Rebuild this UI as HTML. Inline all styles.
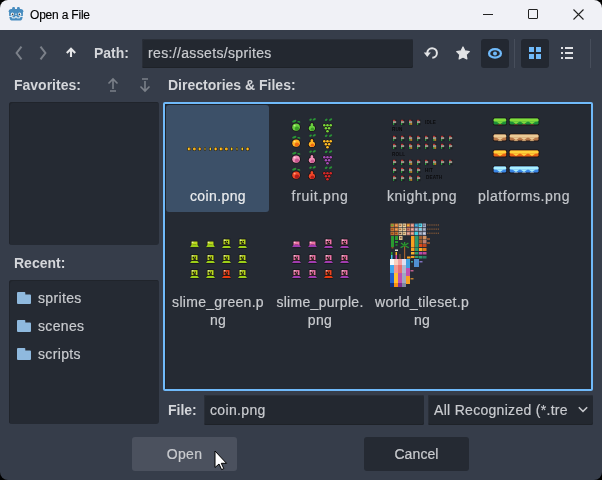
<!DOCTYPE html>
<html><head><meta charset="utf-8">
<style>
html,body{margin:0;padding:0;}
body{width:602px;height:480px;position:relative;overflow:hidden;background:#000;font-family:"Liberation Sans",sans-serif;}
.a{position:absolute;}
#title{left:0;top:0;width:602px;height:30px;background:#f0f1f6;border-radius:8px 8px 0 0;}
#body{left:0;top:30px;width:602px;height:450px;background:#363d4a;border-radius:0 0 8px 8px;}
.lbl{will-change:transform;position:absolute;font-weight:bold;font-size:14px;color:#d4d6da;white-space:pre;line-height:16px;}
.txt{will-change:transform;-webkit-text-stroke:0.2px currentColor;position:absolute;font-size:14px;color:#c9cbcf;white-space:pre;line-height:16px;}
.panel{position:absolute;background:#252a33;border-radius:3px;box-shadow:inset 1px 1px 0 #20242b;}
.input{position:absolute;background:#232830;border-radius:2px;box-shadow:inset 1px 1px 0 #2a2f38, inset 0 -1px 0 #1e2228;}
.btn{position:absolute;border-radius:3px;}
svg{position:absolute;overflow:visible;}
</style></head><body>
<div id="title" class="a"></div>
<!-- godot icon -->
<svg style="left:8px;top:6px" width="16" height="16" viewBox="0 0 16 16">
  <rect x="1.1" y="3" width="13.8" height="9" rx="2" fill="#478cbf"/>
  <rect x="1.6" y="7" width="12.8" height="7.6" rx="3.2" fill="#478cbf"/>
  <rect x="4.2" y="1.1" width="2.8" height="3.5" rx="1.1" fill="#478cbf"/>
  <rect x="9" y="1.1" width="2.8" height="3.5" rx="1.1" fill="#478cbf"/>
  <circle cx="2.1" cy="5.2" r="1.4" fill="#478cbf"/>
  <circle cx="13.9" cy="5.2" r="1.4" fill="#478cbf"/>
  <circle cx="4.4" cy="8.2" r="1.6" fill="#fff"/>
  <circle cx="11.6" cy="8.2" r="1.6" fill="#fff"/>
  <circle cx="4.6" cy="8.3" r=".85" fill="#414042"/>
  <circle cx="11.4" cy="8.3" r=".85" fill="#414042"/>
  <rect x="7.5" y="7.5" width="1" height="1.6" fill="#fff"/>
  <path d="M0.6 10.4H4.2V11.9H7.2V10.7H8.8V11.9H11.8V10.4H15.4" stroke="#fff" stroke-width=".9" fill="none"/>
</svg>
<div class="a" style="will-change:transform;left:30px;top:9px;font-size:12px;color:#000;-webkit-text-stroke:0.15px #000;letter-spacing:-0.2px;white-space:pre;line-height:12px">Open a File</div>
<!-- window controls -->
<div class="a" style="left:483px;top:14px;width:10px;height:1px;background:#222"></div>
<div class="a" style="left:528px;top:9px;width:8px;height:8px;border:1px solid #222;border-radius:1px"></div>
<svg style="left:573px;top:9px" width="11" height="11" viewBox="0 0 11 11"><path d="M.5.5l10 10M10.5.5l-10 10" stroke="#222" stroke-width="1.1"/></svg>

<div id="body" class="a"></div>

<!-- toolbar -->
<svg style="left:15px;top:46px" width="8" height="14" viewBox="0 0 8 14"><path d="M6.5 0.6L1.6 7 6.5 13.4" stroke="#7b8089" stroke-width="2" fill="none"/></svg>
<svg style="left:39px;top:46px" width="8" height="14" viewBox="0 0 8 14"><path d="M1.5 0.6L6.4 7 1.5 13.4" stroke="#7b8089" stroke-width="2" fill="none"/></svg>
<svg style="left:66px;top:47px" width="10" height="11" viewBox="0 0 10 11"><path d="M5 10V2.2M0.8 5.9L5 1.7l4.2 4.2" stroke="#e6e7e9" stroke-width="2.1" fill="none"/></svg>
<div class="lbl" style="left:94px;top:45px">Path:</div>
<div class="input" style="left:142px;top:39px;width:271px;height:29px"></div>
<div class="txt" style="left:148px;top:45px;letter-spacing:0.35px">res://assets/sprites</div>
<!-- refresh -->
<svg style="left:420px;top:43px" width="24" height="20" viewBox="0 0 24 20"><path d="M12.3 14.8A4.8 4.8 0 1 0 7.3 10" stroke="#e2e3e5" stroke-width="2" fill="none"/><path d="M3.8 9.6h7L7.3 14z" fill="#e2e3e5"/></svg>
<!-- star -->
<svg style="left:456px;top:46px" width="14" height="14" viewBox="0 0 14 14"><polygon points="7.00,1.00 8.94,4.93 13.28,5.56 10.14,8.62 10.88,12.94 7.00,10.90 3.12,12.94 3.86,8.62 0.72,5.56 5.06,4.93" fill="#e2e3e5" stroke="#e2e3e5" stroke-width="1.2" stroke-linejoin="round"/></svg>
<!-- eye btn -->
<div class="btn" style="left:481px;top:39px;width:28px;height:29px;background:#232831"></div>
<svg style="left:488px;top:48px" width="14" height="11" viewBox="0 0 14 11"><ellipse cx="7" cy="5.4" rx="5.9" ry="4.3" stroke="#70bafa" stroke-width="2.3" fill="none"/><circle cx="7" cy="5.4" r="2" fill="#70bafa"/></svg>
<div class="a" style="left:514px;top:39px;width:1px;height:29px;background:#474e5b"></div>
<!-- grid btn -->
<div class="btn" style="left:521px;top:39px;width:28px;height:29px;background:#232831"></div>
<div class="a" style="left:529px;top:47px;width:5px;height:5px;background:#70bafa"></div>
<div class="a" style="left:536px;top:47px;width:5px;height:5px;background:#70bafa"></div>
<div class="a" style="left:529px;top:54px;width:5px;height:5px;background:#70bafa"></div>
<div class="a" style="left:536px;top:54px;width:5px;height:5px;background:#70bafa"></div>
<!-- list icon -->
<div class="a" style="left:561px;top:47px;width:2px;height:2px;background:#e0e1e4"></div>
<div class="a" style="left:565px;top:47px;width:8px;height:2px;background:#e0e1e4"></div>
<div class="a" style="left:561px;top:52px;width:2px;height:2px;background:#e0e1e4"></div>
<div class="a" style="left:565px;top:52px;width:8px;height:2px;background:#e0e1e4"></div>
<div class="a" style="left:561px;top:57px;width:2px;height:2px;background:#e0e1e4"></div>
<div class="a" style="left:565px;top:57px;width:8px;height:2px;background:#e0e1e4"></div>
<div class="a" style="left:590px;top:39px;width:1px;height:29px;background:#474e5b"></div>

<!-- favorites -->
<div class="lbl" style="left:14px;top:77px">Favorites:</div>
<svg style="left:107px;top:77px" width="12" height="16" viewBox="0 0 12 16"><path d="M6 12V2M1.5 6.5L6 2l4.5 4.5M3 14h6" stroke="#7b8089" stroke-width="1.6" fill="none"/></svg>
<svg style="left:139px;top:77px" width="12" height="16" viewBox="0 0 12 16"><path d="M6 4v10M1.5 9.5L6 14l4.5-4.5M3 2h6" stroke="#7b8089" stroke-width="1.6" fill="none"/></svg>
<div class="panel" style="left:9px;top:102px;width:150px;height:143px"></div>

<div class="lbl" style="left:168px;top:77px">Directories &amp; Files:</div>

<!-- recent -->
<div class="lbl" style="left:14px;top:255px">Recent:</div>
<div class="panel" style="left:9px;top:280px;width:150px;height:144px"></div>
<svg style="left:17px;top:292px" width="14" height="12" viewBox="0 0 14 12"><path d="M1 0H7.5A.8.8 0 0 1 8.3.8V2.5H13A1 1 0 0 1 14 3.5V11A1 1 0 0 1 13 12H1A1 1 0 0 1 0 11V1A1 1 0 0 1 1 0z" fill="#8fb9de"/></svg>
<div class="txt" style="left:38px;top:290px;letter-spacing:0.35px">sprites</div>
<svg style="left:17px;top:320px" width="14" height="12" viewBox="0 0 14 12"><path d="M1 0H7.5A.8.8 0 0 1 8.3.8V2.5H13A1 1 0 0 1 14 3.5V11A1 1 0 0 1 13 12H1A1 1 0 0 1 0 11V1A1 1 0 0 1 1 0z" fill="#8fb9de"/></svg>
<div class="txt" style="left:38px;top:318px;letter-spacing:0.35px">scenes</div>
<svg style="left:17px;top:348px" width="14" height="12" viewBox="0 0 14 12"><path d="M1 0H7.5A.8.8 0 0 1 8.3.8V2.5H13A1 1 0 0 1 14 3.5V11A1 1 0 0 1 13 12H1A1 1 0 0 1 0 11V1A1 1 0 0 1 1 0z" fill="#8fb9de"/></svg>
<div class="txt" style="left:38px;top:346px;letter-spacing:0.35px">scripts</div>


<!-- file list panel -->
<div class="a" style="left:163px;top:102px;width:426px;height:285px;border:2px solid #70bafa;border-radius:2px;background:#252a33;box-shadow:inset 1px 1px 0 #1e2228"></div>
<div class="a" style="left:166px;top:105px;width:103px;height:107px;background:#3c5068;border-radius:3px"></div>
<div id="items"></div>
<!--SPRITES-->
<svg style="left:0;top:0" width="602" height="480" viewBox="0 0 602 480"><ellipse cx="189.00" cy="149" rx="1.90" ry="2" fill="#1e1c18"/><ellipse cx="189.00" cy="149" rx="1.30" ry="1.4" fill="#f8c820"/><rect x="189.3" y="148" width="1" height="2" fill="#e07a10"/><ellipse cx="194.33" cy="149" rx="1.90" ry="2" fill="#1e1c18"/><ellipse cx="194.33" cy="149" rx="1.30" ry="1.4" fill="#f8c820"/><rect x="194.63000000000002" y="148" width="1" height="2" fill="#e07a10"/><ellipse cx="199.66" cy="149" rx="1.70" ry="2" fill="#1e1c18"/><ellipse cx="199.66" cy="149" rx="1.10" ry="1.4" fill="#f8c820"/><rect x="199.76" y="148" width="1" height="2" fill="#e07a10"/><ellipse cx="204.99" cy="149" rx="1.10" ry="2" fill="#1e1c18"/><ellipse cx="204.99" cy="149" rx="0.50" ry="1.4" fill="#f8c820"/><ellipse cx="210.32" cy="149" rx="1.40" ry="2" fill="#1e1c18"/><ellipse cx="210.32" cy="149" rx="0.80" ry="1.4" fill="#f8c820"/><ellipse cx="215.65" cy="149" rx="1.90" ry="2" fill="#1e1c18"/><ellipse cx="215.65" cy="149" rx="1.30" ry="1.4" fill="#f8c820"/><rect x="215.95000000000002" y="148" width="1" height="2" fill="#e07a10"/><ellipse cx="220.98" cy="149" rx="2.00" ry="2" fill="#1e1c18"/><ellipse cx="220.98" cy="149" rx="1.40" ry="1.4" fill="#f8c820"/><rect x="221.38" y="148" width="1" height="2" fill="#e07a10"/><ellipse cx="226.31" cy="149" rx="1.90" ry="2" fill="#1e1c18"/><ellipse cx="226.31" cy="149" rx="1.30" ry="1.4" fill="#f8c820"/><rect x="226.61" y="148" width="1" height="2" fill="#e07a10"/><ellipse cx="231.64" cy="149" rx="1.50" ry="2" fill="#1e1c18"/><ellipse cx="231.64" cy="149" rx="0.90" ry="1.4" fill="#f8c820"/><ellipse cx="236.97" cy="149" rx="1.10" ry="2" fill="#1e1c18"/><ellipse cx="236.97" cy="149" rx="0.50" ry="1.4" fill="#f8c820"/><ellipse cx="242.30" cy="149" rx="1.50" ry="2" fill="#1e1c18"/><ellipse cx="242.30" cy="149" rx="0.90" ry="1.4" fill="#f8c820"/><ellipse cx="247.63" cy="149" rx="1.90" ry="2" fill="#1e1c18"/><ellipse cx="247.63" cy="149" rx="1.30" ry="1.4" fill="#f8c820"/><rect x="247.93" y="148" width="1" height="2" fill="#e07a10"/><ellipse cx="294.30" cy="121.20" rx="2.2" ry="1.1" fill="#2a9436" transform="rotate(-20 294.3 121.2)"/><ellipse cx="298.80" cy="121.80" rx="1.6" ry="0.8" fill="#2a9436" transform="rotate(15 298.8 121.8)"/><ellipse cx="296.10" cy="127.20" rx="4.6" ry="4.4" fill="#1a1416"/><ellipse cx="296.10" cy="127.20" rx="3.8" ry="3.6" fill="#6ad040"/><ellipse cx="297.00" cy="128.40" rx="2.2" ry="2.0" fill="#3c9c26"/><ellipse cx="294.60" cy="125.60" rx="1.0" ry="0.9" fill="#b8f080"/><ellipse cx="310.60" cy="119.60" rx="1.4" ry="1.0" fill="#2a9436" transform="rotate(-35 310.6 119.6)"/><ellipse cx="314.20" cy="119.30" rx="1.8" ry="1.0" fill="#2a9436" transform="rotate(-30 314.2 119.3)"/><ellipse cx="311.90" cy="128.20" rx="3.9" ry="3.5" fill="#1a1416"/><ellipse cx="311.90" cy="124.60" rx="2.2" ry="2.4" fill="#1a1416"/><ellipse cx="311.90" cy="128.20" rx="3.1" ry="2.8" fill="#6ad040"/><ellipse cx="311.90" cy="124.80" rx="1.4" ry="1.8" fill="#6ad040"/><ellipse cx="312.40" cy="129.20" rx="1.8" ry="1.6" fill="#3c9c26"/><ellipse cx="326.20" cy="119.80" rx="1.5" ry="1.0" fill="#2a9436" transform="rotate(-30 326.2 119.8)"/><ellipse cx="330.60" cy="119.60" rx="1.8" ry="1.0" fill="#2a9436" transform="rotate(-30 330.6 119.6)"/><ellipse cx="324.30" cy="125.30" rx="1.9" ry="1.8" fill="#1a1416"/><ellipse cx="327.50" cy="125.30" rx="1.9" ry="1.8" fill="#1a1416"/><ellipse cx="330.70" cy="125.30" rx="1.9" ry="1.8" fill="#1a1416"/><ellipse cx="325.90" cy="128.30" rx="1.9" ry="1.8" fill="#1a1416"/><ellipse cx="329.10" cy="128.30" rx="1.9" ry="1.8" fill="#1a1416"/><ellipse cx="327.50" cy="131.20" rx="1.9" ry="1.8" fill="#1a1416"/><ellipse cx="324.30" cy="125.30" rx="1.3" ry="1.2" fill="#7ad83a"/><ellipse cx="327.50" cy="125.30" rx="1.3" ry="1.2" fill="#7ad83a"/><ellipse cx="330.70" cy="125.30" rx="1.3" ry="1.2" fill="#7ad83a"/><ellipse cx="325.90" cy="128.30" rx="1.3" ry="1.2" fill="#7ad83a"/><ellipse cx="329.10" cy="128.30" rx="1.3" ry="1.2" fill="#7ad83a"/><ellipse cx="327.50" cy="131.20" rx="1.3" ry="1.2" fill="#7ad83a"/><ellipse cx="294.30" cy="137.20" rx="2.2" ry="1.1" fill="#2a9436" transform="rotate(-20 294.3 137.2)"/><ellipse cx="298.80" cy="137.80" rx="1.6" ry="0.8" fill="#2a9436" transform="rotate(15 298.8 137.8)"/><ellipse cx="296.10" cy="143.20" rx="4.6" ry="4.4" fill="#1a1416"/><ellipse cx="296.10" cy="143.20" rx="3.8" ry="3.6" fill="#ffb424"/><ellipse cx="297.00" cy="144.40" rx="2.2" ry="2.0" fill="#ee6a12"/><ellipse cx="294.60" cy="141.60" rx="1.0" ry="0.9" fill="#ffe080"/><ellipse cx="310.60" cy="135.60" rx="1.4" ry="1.0" fill="#2a9436" transform="rotate(-35 310.6 135.6)"/><ellipse cx="314.20" cy="135.30" rx="1.8" ry="1.0" fill="#2a9436" transform="rotate(-30 314.2 135.3)"/><ellipse cx="311.90" cy="144.20" rx="3.9" ry="3.5" fill="#1a1416"/><ellipse cx="311.90" cy="140.60" rx="2.2" ry="2.4" fill="#1a1416"/><ellipse cx="311.90" cy="144.20" rx="3.1" ry="2.8" fill="#ffb424"/><ellipse cx="311.90" cy="140.80" rx="1.4" ry="1.8" fill="#ffb424"/><ellipse cx="312.40" cy="145.20" rx="1.8" ry="1.6" fill="#ee6a12"/><ellipse cx="326.20" cy="135.80" rx="1.5" ry="1.0" fill="#2a9436" transform="rotate(-30 326.2 135.8)"/><ellipse cx="330.60" cy="135.60" rx="1.8" ry="1.0" fill="#2a9436" transform="rotate(-30 330.6 135.6)"/><ellipse cx="324.30" cy="141.30" rx="1.9" ry="1.8" fill="#1a1416"/><ellipse cx="327.50" cy="141.30" rx="1.9" ry="1.8" fill="#1a1416"/><ellipse cx="330.70" cy="141.30" rx="1.9" ry="1.8" fill="#1a1416"/><ellipse cx="325.90" cy="144.30" rx="1.9" ry="1.8" fill="#1a1416"/><ellipse cx="329.10" cy="144.30" rx="1.9" ry="1.8" fill="#1a1416"/><ellipse cx="327.50" cy="147.20" rx="1.9" ry="1.8" fill="#1a1416"/><ellipse cx="324.30" cy="141.30" rx="1.3" ry="1.2" fill="#ffbc24"/><ellipse cx="327.50" cy="141.30" rx="1.3" ry="1.2" fill="#ffbc24"/><ellipse cx="330.70" cy="141.30" rx="1.3" ry="1.2" fill="#ffbc24"/><ellipse cx="325.90" cy="144.30" rx="1.3" ry="1.2" fill="#ffbc24"/><ellipse cx="329.10" cy="144.30" rx="1.3" ry="1.2" fill="#ffbc24"/><ellipse cx="327.50" cy="147.20" rx="1.3" ry="1.2" fill="#ffbc24"/><ellipse cx="294.30" cy="153.20" rx="2.2" ry="1.1" fill="#2a9436" transform="rotate(-20 294.3 153.2)"/><ellipse cx="298.80" cy="153.80" rx="1.6" ry="0.8" fill="#2a9436" transform="rotate(15 298.8 153.8)"/><ellipse cx="296.10" cy="159.20" rx="4.6" ry="4.4" fill="#1a1416"/><ellipse cx="296.10" cy="159.20" rx="3.8" ry="3.6" fill="#f090b8"/><ellipse cx="297.00" cy="160.40" rx="2.2" ry="2.0" fill="#c85890"/><ellipse cx="294.60" cy="157.60" rx="1.0" ry="0.9" fill="#ffd0e0"/><ellipse cx="310.60" cy="151.60" rx="1.4" ry="1.0" fill="#2a9436" transform="rotate(-35 310.6 151.6)"/><ellipse cx="314.20" cy="151.30" rx="1.8" ry="1.0" fill="#2a9436" transform="rotate(-30 314.2 151.3)"/><ellipse cx="311.90" cy="160.20" rx="3.9" ry="3.5" fill="#1a1416"/><ellipse cx="311.90" cy="156.60" rx="2.2" ry="2.4" fill="#1a1416"/><ellipse cx="311.90" cy="160.20" rx="3.1" ry="2.8" fill="#f090b8"/><ellipse cx="311.90" cy="156.80" rx="1.4" ry="1.8" fill="#f090b8"/><ellipse cx="312.40" cy="161.20" rx="1.8" ry="1.6" fill="#c85890"/><ellipse cx="326.20" cy="151.80" rx="1.5" ry="1.0" fill="#2a9436" transform="rotate(-30 326.2 151.8)"/><ellipse cx="330.60" cy="151.60" rx="1.8" ry="1.0" fill="#2a9436" transform="rotate(-30 330.6 151.6)"/><ellipse cx="324.30" cy="157.30" rx="1.9" ry="1.8" fill="#1a1416"/><ellipse cx="327.50" cy="157.30" rx="1.9" ry="1.8" fill="#1a1416"/><ellipse cx="330.70" cy="157.30" rx="1.9" ry="1.8" fill="#1a1416"/><ellipse cx="325.90" cy="160.30" rx="1.9" ry="1.8" fill="#1a1416"/><ellipse cx="329.10" cy="160.30" rx="1.9" ry="1.8" fill="#1a1416"/><ellipse cx="327.50" cy="163.20" rx="1.9" ry="1.8" fill="#1a1416"/><ellipse cx="324.30" cy="157.30" rx="1.3" ry="1.2" fill="#a44cb8"/><ellipse cx="327.50" cy="157.30" rx="1.3" ry="1.2" fill="#a44cb8"/><ellipse cx="330.70" cy="157.30" rx="1.3" ry="1.2" fill="#a44cb8"/><ellipse cx="325.90" cy="160.30" rx="1.3" ry="1.2" fill="#a44cb8"/><ellipse cx="329.10" cy="160.30" rx="1.3" ry="1.2" fill="#a44cb8"/><ellipse cx="327.50" cy="163.20" rx="1.3" ry="1.2" fill="#a44cb8"/><ellipse cx="294.30" cy="169.20" rx="2.2" ry="1.1" fill="#2a9436" transform="rotate(-20 294.3 169.2)"/><ellipse cx="298.80" cy="169.80" rx="1.6" ry="0.8" fill="#2a9436" transform="rotate(15 298.8 169.8)"/><ellipse cx="296.10" cy="175.20" rx="4.6" ry="4.4" fill="#1a1416"/><ellipse cx="296.10" cy="175.20" rx="3.8" ry="3.6" fill="#f04828"/><ellipse cx="297.00" cy="176.40" rx="2.2" ry="2.0" fill="#b01c1c"/><ellipse cx="294.60" cy="173.60" rx="1.0" ry="0.9" fill="#ffa080"/><ellipse cx="310.60" cy="167.60" rx="1.4" ry="1.0" fill="#2a9436" transform="rotate(-35 310.6 167.6)"/><ellipse cx="314.20" cy="167.30" rx="1.8" ry="1.0" fill="#2a9436" transform="rotate(-30 314.2 167.3)"/><ellipse cx="311.90" cy="176.20" rx="3.9" ry="3.5" fill="#1a1416"/><ellipse cx="311.90" cy="172.60" rx="2.2" ry="2.4" fill="#1a1416"/><ellipse cx="311.90" cy="176.20" rx="3.1" ry="2.8" fill="#f04828"/><ellipse cx="311.90" cy="172.80" rx="1.4" ry="1.8" fill="#f04828"/><ellipse cx="312.40" cy="177.20" rx="1.8" ry="1.6" fill="#b01c1c"/><ellipse cx="326.20" cy="167.80" rx="1.5" ry="1.0" fill="#2a9436" transform="rotate(-30 326.2 167.8)"/><ellipse cx="330.60" cy="167.60" rx="1.8" ry="1.0" fill="#2a9436" transform="rotate(-30 330.6 167.6)"/><ellipse cx="324.30" cy="173.30" rx="1.9" ry="1.8" fill="#1a1416"/><ellipse cx="327.50" cy="173.30" rx="1.9" ry="1.8" fill="#1a1416"/><ellipse cx="330.70" cy="173.30" rx="1.9" ry="1.8" fill="#1a1416"/><ellipse cx="325.90" cy="176.30" rx="1.9" ry="1.8" fill="#1a1416"/><ellipse cx="329.10" cy="176.30" rx="1.9" ry="1.8" fill="#1a1416"/><ellipse cx="327.50" cy="179.20" rx="1.9" ry="1.8" fill="#1a1416"/><ellipse cx="324.30" cy="173.30" rx="1.3" ry="1.2" fill="#d42828"/><ellipse cx="327.50" cy="173.30" rx="1.3" ry="1.2" fill="#d42828"/><ellipse cx="330.70" cy="173.30" rx="1.3" ry="1.2" fill="#d42828"/><ellipse cx="325.90" cy="176.30" rx="1.3" ry="1.2" fill="#d42828"/><ellipse cx="329.10" cy="176.30" rx="1.3" ry="1.2" fill="#d42828"/><ellipse cx="327.50" cy="179.20" rx="1.3" ry="1.2" fill="#d42828"/><rect x="392.6" y="119.6" width="4" height="5.6" fill="#1c1e22"/><rect x="393" y="119.8" width="2.3" height="1.3" fill="#b83232"/><rect x="393" y="121.1" width="3.2" height="2" fill="#a09a8e"/><rect x="393" y="123.1" width="1.2" height="1.7" fill="#28b040"/><rect x="400.6" y="119.6" width="4" height="5.6" fill="#1c1e22"/><rect x="401" y="119.8" width="2.3" height="1.3" fill="#b83232"/><rect x="401" y="121.1" width="3.2" height="2" fill="#a09a8e"/><rect x="401" y="123.1" width="1.2" height="1.7" fill="#28b040"/><rect x="408.6" y="119.6" width="4" height="5.6" fill="#1c1e22"/><rect x="409" y="119.8" width="2.3" height="1.3" fill="#b83232"/><rect x="409" y="121.1" width="3.2" height="2" fill="#a09a8e"/><rect x="409" y="123.1" width="1.2" height="1.7" fill="#28b040"/><rect x="410.2" y="123.1" width="2" height="1.7" fill="#c88a2a"/><rect x="416.6" y="119.6" width="4" height="5.6" fill="#1c1e22"/><rect x="417" y="119.8" width="2.3" height="1.3" fill="#b83232"/><rect x="417" y="121.1" width="3.2" height="2" fill="#a09a8e"/><rect x="417" y="123.1" width="1.2" height="1.7" fill="#28b040"/><rect x="392.6" y="135.60000000000002" width="4" height="5.6" fill="#1c1e22"/><rect x="393" y="135.8" width="2.3" height="1.3" fill="#b83232"/><rect x="393" y="137.10000000000002" width="3.2" height="2" fill="#a09a8e"/><rect x="393" y="139.10000000000002" width="1.2" height="1.7" fill="#28b040"/><rect x="400.6" y="135.60000000000002" width="4" height="5.6" fill="#1c1e22"/><rect x="401" y="135.8" width="2.3" height="1.3" fill="#b83232"/><rect x="401" y="137.10000000000002" width="3.2" height="2" fill="#a09a8e"/><rect x="401" y="139.10000000000002" width="1.2" height="1.7" fill="#28b040"/><rect x="408.6" y="135.60000000000002" width="4" height="5.6" fill="#1c1e22"/><rect x="409" y="135.8" width="2.3" height="1.3" fill="#b83232"/><rect x="409" y="137.10000000000002" width="3.2" height="2" fill="#a09a8e"/><rect x="409" y="139.10000000000002" width="1.2" height="1.7" fill="#28b040"/><rect x="410.2" y="139.10000000000002" width="2" height="1.7" fill="#c88a2a"/><rect x="416.6" y="135.60000000000002" width="4" height="5.6" fill="#1c1e22"/><rect x="417" y="135.8" width="2.3" height="1.3" fill="#b83232"/><rect x="417" y="137.10000000000002" width="3.2" height="2" fill="#a09a8e"/><rect x="417" y="139.10000000000002" width="1.2" height="1.7" fill="#28b040"/><rect x="424.6" y="135.60000000000002" width="4" height="5.6" fill="#1c1e22"/><rect x="425" y="135.8" width="2.3" height="1.3" fill="#b83232"/><rect x="425" y="137.10000000000002" width="3.2" height="2" fill="#a09a8e"/><rect x="425" y="139.10000000000002" width="1.2" height="1.7" fill="#28b040"/><rect x="432.6" y="135.60000000000002" width="4" height="5.6" fill="#1c1e22"/><rect x="433" y="135.8" width="2.3" height="1.3" fill="#b83232"/><rect x="433" y="137.10000000000002" width="3.2" height="2" fill="#a09a8e"/><rect x="433" y="139.10000000000002" width="1.2" height="1.7" fill="#28b040"/><rect x="434.2" y="139.10000000000002" width="2" height="1.7" fill="#c88a2a"/><rect x="440.6" y="135.60000000000002" width="4" height="5.6" fill="#1c1e22"/><rect x="441" y="135.8" width="2.3" height="1.3" fill="#b83232"/><rect x="441" y="137.10000000000002" width="3.2" height="2" fill="#a09a8e"/><rect x="441" y="139.10000000000002" width="1.2" height="1.7" fill="#28b040"/><rect x="448.6" y="135.60000000000002" width="4" height="5.6" fill="#1c1e22"/><rect x="449" y="135.8" width="2.3" height="1.3" fill="#b83232"/><rect x="449" y="137.10000000000002" width="3.2" height="2" fill="#a09a8e"/><rect x="449" y="139.10000000000002" width="1.2" height="1.7" fill="#28b040"/><rect x="392.6" y="143.60000000000002" width="4" height="5.6" fill="#1c1e22"/><rect x="393" y="143.8" width="2.3" height="1.3" fill="#b83232"/><rect x="393" y="145.10000000000002" width="3.2" height="2" fill="#a09a8e"/><rect x="393" y="147.10000000000002" width="1.2" height="1.7" fill="#28b040"/><rect x="400.6" y="143.60000000000002" width="4" height="5.6" fill="#1c1e22"/><rect x="401" y="143.8" width="2.3" height="1.3" fill="#b83232"/><rect x="401" y="145.10000000000002" width="3.2" height="2" fill="#a09a8e"/><rect x="401" y="147.10000000000002" width="1.2" height="1.7" fill="#28b040"/><rect x="408.6" y="143.60000000000002" width="4" height="5.6" fill="#1c1e22"/><rect x="409" y="143.8" width="2.3" height="1.3" fill="#b83232"/><rect x="409" y="145.10000000000002" width="3.2" height="2" fill="#a09a8e"/><rect x="409" y="147.10000000000002" width="1.2" height="1.7" fill="#28b040"/><rect x="410.2" y="147.10000000000002" width="2" height="1.7" fill="#c88a2a"/><rect x="416.6" y="143.60000000000002" width="4" height="5.6" fill="#1c1e22"/><rect x="417" y="143.8" width="2.3" height="1.3" fill="#b83232"/><rect x="417" y="145.10000000000002" width="3.2" height="2" fill="#a09a8e"/><rect x="417" y="147.10000000000002" width="1.2" height="1.7" fill="#28b040"/><rect x="424.6" y="143.60000000000002" width="4" height="5.6" fill="#1c1e22"/><rect x="425" y="143.8" width="2.3" height="1.3" fill="#b83232"/><rect x="425" y="145.10000000000002" width="3.2" height="2" fill="#a09a8e"/><rect x="425" y="147.10000000000002" width="1.2" height="1.7" fill="#28b040"/><rect x="432.6" y="143.60000000000002" width="4" height="5.6" fill="#1c1e22"/><rect x="433" y="143.8" width="2.3" height="1.3" fill="#b83232"/><rect x="433" y="145.10000000000002" width="3.2" height="2" fill="#a09a8e"/><rect x="433" y="147.10000000000002" width="1.2" height="1.7" fill="#28b040"/><rect x="434.2" y="147.10000000000002" width="2" height="1.7" fill="#c88a2a"/><rect x="440.6" y="143.60000000000002" width="4" height="5.6" fill="#1c1e22"/><rect x="441" y="143.8" width="2.3" height="1.3" fill="#b83232"/><rect x="441" y="145.10000000000002" width="3.2" height="2" fill="#a09a8e"/><rect x="441" y="147.10000000000002" width="1.2" height="1.7" fill="#28b040"/><rect x="448.6" y="143.60000000000002" width="4" height="5.6" fill="#1c1e22"/><rect x="449" y="143.8" width="2.3" height="1.3" fill="#b83232"/><rect x="449" y="145.10000000000002" width="3.2" height="2" fill="#a09a8e"/><rect x="449" y="147.10000000000002" width="1.2" height="1.7" fill="#28b040"/><rect x="392.6" y="159.60000000000002" width="4" height="5.6" fill="#1c1e22"/><rect x="393" y="159.8" width="2.3" height="1.3" fill="#b83232"/><rect x="393" y="161.10000000000002" width="3.2" height="2" fill="#a09a8e"/><rect x="393" y="163.10000000000002" width="1.2" height="1.7" fill="#28b040"/><rect x="400.6" y="159.60000000000002" width="4" height="5.6" fill="#1c1e22"/><rect x="401" y="159.8" width="2.3" height="1.3" fill="#b83232"/><rect x="401" y="161.10000000000002" width="3.2" height="2" fill="#a09a8e"/><rect x="401" y="163.10000000000002" width="1.2" height="1.7" fill="#28b040"/><rect x="408.6" y="159.60000000000002" width="4" height="5.6" fill="#1c1e22"/><rect x="409" y="159.8" width="2.3" height="1.3" fill="#b83232"/><rect x="409" y="161.10000000000002" width="3.2" height="2" fill="#a09a8e"/><rect x="409" y="163.10000000000002" width="1.2" height="1.7" fill="#28b040"/><rect x="410.2" y="163.10000000000002" width="2" height="1.7" fill="#c88a2a"/><rect x="416.6" y="159.60000000000002" width="4" height="5.6" fill="#1c1e22"/><rect x="417" y="159.8" width="2.3" height="1.3" fill="#b83232"/><rect x="417" y="161.10000000000002" width="3.2" height="2" fill="#a09a8e"/><rect x="417" y="163.10000000000002" width="1.2" height="1.7" fill="#28b040"/><rect x="424.6" y="159.60000000000002" width="4" height="5.6" fill="#1c1e22"/><rect x="425" y="159.8" width="2.3" height="1.3" fill="#b83232"/><rect x="425" y="161.10000000000002" width="3.2" height="2" fill="#a09a8e"/><rect x="425" y="163.10000000000002" width="1.2" height="1.7" fill="#28b040"/><rect x="432.6" y="159.60000000000002" width="4" height="5.6" fill="#1c1e22"/><rect x="433" y="159.8" width="2.3" height="1.3" fill="#b83232"/><rect x="433" y="161.10000000000002" width="3.2" height="2" fill="#a09a8e"/><rect x="433" y="163.10000000000002" width="1.2" height="1.7" fill="#28b040"/><rect x="434.2" y="163.10000000000002" width="2" height="1.7" fill="#c88a2a"/><rect x="440.6" y="159.60000000000002" width="4" height="5.6" fill="#1c1e22"/><rect x="441" y="159.8" width="2.3" height="1.3" fill="#b83232"/><rect x="441" y="161.10000000000002" width="3.2" height="2" fill="#a09a8e"/><rect x="441" y="163.10000000000002" width="1.2" height="1.7" fill="#28b040"/><rect x="448.6" y="159.60000000000002" width="4" height="5.6" fill="#1c1e22"/><rect x="449" y="159.8" width="2.3" height="1.3" fill="#b83232"/><rect x="449" y="161.10000000000002" width="3.2" height="2" fill="#a09a8e"/><rect x="449" y="163.10000000000002" width="1.2" height="1.7" fill="#28b040"/><rect x="392.6" y="167.60000000000002" width="4" height="5.6" fill="#1c1e22"/><rect x="393" y="167.8" width="2.3" height="1.3" fill="#b83232"/><rect x="393" y="169.10000000000002" width="3.2" height="2" fill="#a09a8e"/><rect x="393" y="171.10000000000002" width="1.2" height="1.7" fill="#28b040"/><rect x="400.6" y="167.60000000000002" width="4" height="5.6" fill="#1c1e22"/><rect x="401" y="167.8" width="2.3" height="1.3" fill="#b83232"/><rect x="401" y="169.10000000000002" width="3.2" height="2" fill="#a09a8e"/><rect x="401" y="171.10000000000002" width="1.2" height="1.7" fill="#28b040"/><rect x="408.6" y="167.60000000000002" width="4" height="5.6" fill="#1c1e22"/><rect x="409" y="167.8" width="2.3" height="1.3" fill="#b83232"/><rect x="409" y="169.10000000000002" width="3.2" height="2" fill="#a09a8e"/><rect x="409" y="171.10000000000002" width="1.2" height="1.7" fill="#28b040"/><rect x="410.2" y="171.10000000000002" width="2" height="1.7" fill="#c88a2a"/><rect x="416.6" y="167.60000000000002" width="4" height="5.6" fill="#1c1e22"/><rect x="417" y="167.8" width="2.3" height="1.3" fill="#b83232"/><rect x="417" y="169.10000000000002" width="3.2" height="2" fill="#a09a8e"/><rect x="417" y="171.10000000000002" width="1.2" height="1.7" fill="#28b040"/><rect x="392.6" y="175.60000000000002" width="4" height="5.6" fill="#1c1e22"/><rect x="393" y="175.8" width="2.3" height="1.3" fill="#b83232"/><rect x="393" y="177.10000000000002" width="3.2" height="2" fill="#a09a8e"/><rect x="393" y="179.10000000000002" width="1.2" height="1.7" fill="#28b040"/><rect x="400.6" y="175.60000000000002" width="4" height="5.6" fill="#1c1e22"/><rect x="401" y="175.8" width="2.3" height="1.3" fill="#b83232"/><rect x="401" y="177.10000000000002" width="3.2" height="2" fill="#a09a8e"/><rect x="401" y="179.10000000000002" width="1.2" height="1.7" fill="#28b040"/><rect x="408.6" y="175.60000000000002" width="4" height="5.6" fill="#1c1e22"/><rect x="409" y="175.8" width="2.3" height="1.3" fill="#b83232"/><rect x="409" y="177.10000000000002" width="3.2" height="2" fill="#a09a8e"/><rect x="409" y="179.10000000000002" width="1.2" height="1.7" fill="#28b040"/><rect x="410.2" y="179.10000000000002" width="2" height="1.7" fill="#c88a2a"/><rect x="416.6" y="175.60000000000002" width="4" height="5.6" fill="#1c1e22"/><rect x="417" y="175.8" width="2.3" height="1.3" fill="#b83232"/><rect x="417" y="177.10000000000002" width="3.2" height="2" fill="#a09a8e"/><rect x="417" y="179.10000000000002" width="1.2" height="1.7" fill="#28b040"/><text x="425" y="123.8" font-family="Liberation Sans" font-weight="bold" font-size="4.6" letter-spacing="0.15" fill="#0c0c0e">IDLE</text><text x="392" y="131.3" font-family="Liberation Sans" font-weight="bold" font-size="4.6" letter-spacing="0.15" fill="#0c0c0e">RUN</text><text x="392" y="155.8" font-family="Liberation Sans" font-weight="bold" font-size="4.6" letter-spacing="0.15" fill="#0c0c0e">ROLL</text><text x="425" y="171.8" font-family="Liberation Sans" font-weight="bold" font-size="4.6" letter-spacing="0.15" fill="#0c0c0e">HIT</text><text x="426" y="179.3" font-family="Liberation Sans" font-weight="bold" font-size="4.6" letter-spacing="0.15" fill="#0c0c0e">DEATH</text><rect x="492.8" y="117.6" width="14.2" height="8" rx="2" fill="#1a1416"/><rect x="493.6" y="118.39999999999999" width="12.6" height="6.2" rx="1.4" fill="#1e9038"/><rect x="493.6" y="118.39999999999999" width="12.6" height="3.2" rx="1.4" fill="#84dc3c"/><path d="M496.4 121.39999999999999L500 124.0L503.6 121.39999999999999z" fill="#84dc3c"/><rect x="498.2" y="124.1" width="3.6" height="1" fill="#6a3a2a"/><rect x="508.9" y="117.6" width="30.4" height="8" rx="2" fill="#1a1416"/><rect x="509.7" y="118.39999999999999" width="28.799999999999997" height="6.2" rx="1.4" fill="#1e9038"/><rect x="509.7" y="118.39999999999999" width="28.799999999999997" height="3.2" rx="1.4" fill="#84dc3c"/><path d="M512.4 121.39999999999999L516 124.0L519.6 121.39999999999999z" fill="#84dc3c"/><path d="M520.4 121.39999999999999L524 124.0L527.6 121.39999999999999z" fill="#84dc3c"/><path d="M528.4 121.39999999999999L532 124.0L535.6 121.39999999999999z" fill="#84dc3c"/><rect x="514.2" y="124.1" width="3.6" height="1" fill="#6a3a2a"/><rect x="522.2" y="124.1" width="3.6" height="1" fill="#6a3a2a"/><rect x="530.2" y="124.1" width="3.6" height="1" fill="#6a3a2a"/><rect x="492.8" y="133.6" width="14.2" height="8" rx="2" fill="#1a1416"/><rect x="493.6" y="134.4" width="12.6" height="6.2" rx="1.4" fill="#b8784a"/><rect x="493.6" y="134.4" width="12.6" height="3.2" rx="1.4" fill="#eccb96"/><path d="M496.4 137.4L500 140.0L503.6 137.4z" fill="#eccb96"/><rect x="498.2" y="140.1" width="3.6" height="1" fill="#d0a878"/><rect x="508.9" y="133.6" width="30.4" height="8" rx="2" fill="#1a1416"/><rect x="509.7" y="134.4" width="28.799999999999997" height="6.2" rx="1.4" fill="#b8784a"/><rect x="509.7" y="134.4" width="28.799999999999997" height="3.2" rx="1.4" fill="#eccb96"/><path d="M512.4 137.4L516 140.0L519.6 137.4z" fill="#eccb96"/><path d="M520.4 137.4L524 140.0L527.6 137.4z" fill="#eccb96"/><path d="M528.4 137.4L532 140.0L535.6 137.4z" fill="#eccb96"/><rect x="514.2" y="140.1" width="3.6" height="1" fill="#d0a878"/><rect x="522.2" y="140.1" width="3.6" height="1" fill="#d0a878"/><rect x="530.2" y="140.1" width="3.6" height="1" fill="#d0a878"/><rect x="492.8" y="149.6" width="14.2" height="8" rx="2" fill="#1a1416"/><rect x="493.6" y="150.4" width="12.6" height="6.2" rx="1.4" fill="#e86414"/><rect x="493.6" y="150.4" width="12.6" height="3.2" rx="1.4" fill="#ffd23a"/><path d="M496.4 153.4L500 156.0L503.6 153.4z" fill="#ffd23a"/><rect x="498.2" y="156.1" width="3.6" height="1" fill="#8a3a20"/><rect x="508.9" y="149.6" width="30.4" height="8" rx="2" fill="#1a1416"/><rect x="509.7" y="150.4" width="28.799999999999997" height="6.2" rx="1.4" fill="#e86414"/><rect x="509.7" y="150.4" width="28.799999999999997" height="3.2" rx="1.4" fill="#ffd23a"/><path d="M512.4 153.4L516 156.0L519.6 153.4z" fill="#ffd23a"/><path d="M520.4 153.4L524 156.0L527.6 153.4z" fill="#ffd23a"/><path d="M528.4 153.4L532 156.0L535.6 153.4z" fill="#ffd23a"/><rect x="514.2" y="156.1" width="3.6" height="1" fill="#8a3a20"/><rect x="522.2" y="156.1" width="3.6" height="1" fill="#8a3a20"/><rect x="530.2" y="156.1" width="3.6" height="1" fill="#8a3a20"/><rect x="492.8" y="165.6" width="14.2" height="8" rx="2" fill="#1a1416"/><rect x="493.6" y="166.4" width="12.6" height="6.2" rx="1.4" fill="#3a86e6"/><rect x="493.6" y="166.4" width="12.6" height="3.2" rx="1.4" fill="#aaf0ff"/><path d="M496.4 169.4L500 172.0L503.6 169.4z" fill="#aaf0ff"/><rect x="498.2" y="172.1" width="3.6" height="1" fill="#8a9ab0"/><rect x="508.9" y="165.6" width="30.4" height="8" rx="2" fill="#1a1416"/><rect x="509.7" y="166.4" width="28.799999999999997" height="6.2" rx="1.4" fill="#3a86e6"/><rect x="509.7" y="166.4" width="28.799999999999997" height="3.2" rx="1.4" fill="#aaf0ff"/><path d="M512.4 169.4L516 172.0L519.6 169.4z" fill="#aaf0ff"/><path d="M520.4 169.4L524 172.0L527.6 169.4z" fill="#aaf0ff"/><path d="M528.4 169.4L532 172.0L535.6 169.4z" fill="#aaf0ff"/><rect x="514.2" y="172.1" width="3.6" height="1" fill="#8a9ab0"/><rect x="522.2" y="172.1" width="3.6" height="1" fill="#8a9ab0"/><rect x="530.2" y="172.1" width="3.6" height="1" fill="#8a9ab0"/><rect x="190.8" y="240.9" width="7.4" height="5.6" fill="#15161a"/><rect x="191.5" y="241.5" width="6" height="4.0" fill="#bcd81e"/><rect x="191.8" y="241.8" width="1.6" height="1" fill="#eef2d0"/><rect x="192.5" y="244.2" width="4" height="0.8" fill="#7a9a10"/><path d="M190 247.3H199L197.5 245H191.5z" fill="#9ccf18"/><rect x="190.3" y="247.3" width="8.4" height="0.8" fill="#15161a"/><rect x="206.8" y="240.9" width="7.4" height="5.6" fill="#15161a"/><rect x="207.5" y="241.5" width="6" height="4.0" fill="#bcd81e"/><rect x="207.8" y="241.8" width="1.6" height="1" fill="#eef2d0"/><rect x="208.5" y="244.2" width="4" height="0.8" fill="#7a9a10"/><path d="M206 247.3H215L213.5 245H207.5z" fill="#9ccf18"/><rect x="206.3" y="247.3" width="8.4" height="0.8" fill="#15161a"/><rect x="222.8" y="238.6" width="7.4" height="7.2" fill="#15161a"/><rect x="223.5" y="239.4" width="6" height="5.2" fill="#bcd81e"/><rect x="223.8" y="239.6" width="1.6" height="1.1" fill="#eef2d0"/><rect x="224.6" y="241.0" width="1.6" height="1.6" fill="#16160e"/><rect x="226.8" y="240.9" width="1.2" height="1.2" fill="#16160e"/><rect x="225.4" y="242.6" width="2.4" height="1.6" fill="#16160e"/><rect x="223.5" y="244.6" width="6" height="0.6" fill="#16160e"/><path d="M222 248H231L229.5 246H223.5z" fill="#9ccf18"/><rect x="222.3" y="248" width="8.4" height="0.8" fill="#15161a"/><rect x="238.8" y="238.6" width="7.4" height="7.2" fill="#15161a"/><rect x="239.5" y="239.4" width="6" height="5.2" fill="#bcd81e"/><rect x="239.8" y="239.6" width="1.6" height="1.1" fill="#eef2d0"/><rect x="240.6" y="241.0" width="1.6" height="1.6" fill="#16160e"/><rect x="242.8" y="240.9" width="1.2" height="1.2" fill="#16160e"/><rect x="241.4" y="242.6" width="2.4" height="1.6" fill="#16160e"/><rect x="239.5" y="244.6" width="6" height="0.6" fill="#16160e"/><path d="M238 248H247L245.5 246H239.5z" fill="#9ccf18"/><rect x="238.3" y="248" width="8.4" height="0.8" fill="#15161a"/><rect x="190.8" y="254.29999999999998" width="7.4" height="7.2" fill="#15161a"/><rect x="191.5" y="255.1" width="6" height="5.2" fill="#bcd81e"/><rect x="191.8" y="255.29999999999998" width="1.6" height="1.1" fill="#eef2d0"/><rect x="192.6" y="256.7" width="1.6" height="1.6" fill="#16160e"/><rect x="194.8" y="256.59999999999997" width="1.2" height="1.2" fill="#16160e"/><rect x="193.4" y="258.3" width="2.4" height="1.6" fill="#16160e"/><rect x="191.5" y="260.3" width="6" height="0.6" fill="#16160e"/><path d="M190 263H199L197.5 261H191.5z" fill="#9ccf18"/><rect x="190.3" y="263" width="8.4" height="0.8" fill="#15161a"/><rect x="206.8" y="254.29999999999998" width="7.4" height="7.2" fill="#15161a"/><rect x="207.5" y="255.1" width="6" height="5.2" fill="#bcd81e"/><rect x="207.8" y="255.29999999999998" width="1.6" height="1.1" fill="#eef2d0"/><rect x="208.6" y="256.7" width="1.6" height="1.6" fill="#16160e"/><rect x="210.8" y="256.59999999999997" width="1.2" height="1.2" fill="#16160e"/><rect x="209.4" y="258.3" width="2.4" height="1.6" fill="#16160e"/><rect x="207.5" y="260.3" width="6" height="0.6" fill="#16160e"/><path d="M206 263H215L213.5 261H207.5z" fill="#9ccf18"/><rect x="206.3" y="263" width="8.4" height="0.8" fill="#15161a"/><rect x="222.8" y="254.29999999999998" width="7.4" height="7.2" fill="#15161a"/><rect x="223.5" y="255.1" width="6" height="5.2" fill="#bcd81e"/><rect x="223.8" y="255.29999999999998" width="1.6" height="1.1" fill="#eef2d0"/><rect x="224.6" y="256.7" width="1.6" height="1.6" fill="#16160e"/><rect x="226.8" y="256.59999999999997" width="1.2" height="1.2" fill="#16160e"/><rect x="225.4" y="258.3" width="2.4" height="1.6" fill="#16160e"/><rect x="223.5" y="260.3" width="6" height="0.6" fill="#16160e"/><path d="M222 263H231L229.5 261H223.5z" fill="#9ccf18"/><rect x="222.3" y="263" width="8.4" height="0.8" fill="#15161a"/><rect x="238.8" y="254.29999999999998" width="7.4" height="7.2" fill="#15161a"/><rect x="239.5" y="255.1" width="6" height="5.2" fill="#bcd81e"/><rect x="239.8" y="255.29999999999998" width="1.6" height="1.1" fill="#eef2d0"/><rect x="240.6" y="256.7" width="1.6" height="1.6" fill="#16160e"/><rect x="242.8" y="256.59999999999997" width="1.2" height="1.2" fill="#16160e"/><rect x="241.4" y="258.3" width="2.4" height="1.6" fill="#16160e"/><rect x="239.5" y="260.3" width="6" height="0.6" fill="#16160e"/><path d="M238 263H247L245.5 261H239.5z" fill="#9ccf18"/><rect x="238.3" y="263" width="8.4" height="0.8" fill="#15161a"/><rect x="190.8" y="269.3" width="7.4" height="7.2" fill="#15161a"/><rect x="191.5" y="270.09999999999997" width="6" height="5.2" fill="#bcd81e"/><rect x="191.8" y="270.3" width="1.6" height="1.1" fill="#eef2d0"/><rect x="192.6" y="271.7" width="1.6" height="1.6" fill="#16160e"/><rect x="194.8" y="271.59999999999997" width="1.2" height="1.2" fill="#16160e"/><rect x="193.4" y="273.3" width="2.4" height="1.6" fill="#16160e"/><rect x="191.5" y="275.3" width="6" height="0.6" fill="#16160e"/><path d="M190 278H199L197.5 276H191.5z" fill="#9ccf18"/><rect x="190.3" y="278" width="8.4" height="0.8" fill="#15161a"/><rect x="206.8" y="269.3" width="7.4" height="7.2" fill="#15161a"/><rect x="207.5" y="270.09999999999997" width="6" height="5.2" fill="#bcd81e"/><rect x="207.8" y="270.3" width="1.6" height="1.1" fill="#eef2d0"/><rect x="208.6" y="271.7" width="1.6" height="1.6" fill="#16160e"/><rect x="210.8" y="271.59999999999997" width="1.2" height="1.2" fill="#16160e"/><rect x="209.4" y="273.3" width="2.4" height="1.6" fill="#16160e"/><rect x="207.5" y="275.3" width="6" height="0.6" fill="#16160e"/><path d="M206 278H215L213.5 276H207.5z" fill="#9ccf18"/><rect x="206.3" y="278" width="8.4" height="0.8" fill="#15161a"/><rect x="222.8" y="269.3" width="7.4" height="7.2" fill="#15161a"/><rect x="223.5" y="270.09999999999997" width="6" height="5.2" fill="#ee4420"/><rect x="223.8" y="270.3" width="1.6" height="1.1" fill="#eef2d0"/><rect x="224.6" y="271.7" width="1.6" height="1.6" fill="#16160e"/><rect x="226.8" y="271.59999999999997" width="1.2" height="1.2" fill="#16160e"/><rect x="225.4" y="273.3" width="2.4" height="1.6" fill="#16160e"/><rect x="223.5" y="275.3" width="6" height="0.6" fill="#16160e"/><path d="M222 278H231L229.5 276H223.5z" fill="#e83a10"/><rect x="222.3" y="278" width="8.4" height="0.8" fill="#15161a"/><rect x="238.8" y="269.3" width="7.4" height="7.2" fill="#15161a"/><rect x="239.5" y="270.09999999999997" width="6" height="5.2" fill="#bcd81e"/><rect x="239.8" y="270.3" width="1.6" height="1.1" fill="#eef2d0"/><rect x="240.6" y="271.7" width="1.6" height="1.6" fill="#16160e"/><rect x="242.8" y="271.59999999999997" width="1.2" height="1.2" fill="#16160e"/><rect x="241.4" y="273.3" width="2.4" height="1.6" fill="#16160e"/><rect x="239.5" y="275.3" width="6" height="0.6" fill="#16160e"/><path d="M238 278H247L245.5 276H239.5z" fill="#9ccf18"/><rect x="238.3" y="278" width="8.4" height="0.8" fill="#15161a"/><rect x="292.8" y="240.9" width="7.4" height="5.6" fill="#15161a"/><rect x="293.5" y="241.5" width="6" height="4.0" fill="#ec74a6"/><rect x="293.8" y="241.8" width="1.6" height="1" fill="#f8e0e8"/><rect x="294.5" y="244.2" width="4" height="0.8" fill="#9a3a78"/><path d="M292 247.3H301L299.5 245H293.5z" fill="#a03cb0"/><rect x="292.3" y="247.3" width="8.4" height="0.8" fill="#15161a"/><rect x="308.8" y="240.9" width="7.4" height="5.6" fill="#15161a"/><rect x="309.5" y="241.5" width="6" height="4.0" fill="#ec74a6"/><rect x="309.8" y="241.8" width="1.6" height="1" fill="#f8e0e8"/><rect x="310.5" y="244.2" width="4" height="0.8" fill="#9a3a78"/><path d="M308 247.3H317L315.5 245H309.5z" fill="#a03cb0"/><rect x="308.3" y="247.3" width="8.4" height="0.8" fill="#15161a"/><rect x="324.8" y="238.6" width="7.4" height="7.2" fill="#15161a"/><rect x="325.5" y="239.4" width="6" height="5.2" fill="#ec74a6"/><rect x="325.8" y="239.6" width="1.6" height="1.1" fill="#f8e0e8"/><rect x="326.6" y="241.0" width="1.6" height="1.6" fill="#16160e"/><rect x="328.8" y="240.9" width="1.2" height="1.2" fill="#16160e"/><rect x="327.4" y="242.6" width="2.4" height="1.6" fill="#16160e"/><rect x="325.5" y="244.6" width="6" height="0.6" fill="#16160e"/><path d="M324 248H333L331.5 246H325.5z" fill="#a03cb0"/><rect x="324.3" y="248" width="8.4" height="0.8" fill="#15161a"/><rect x="340.8" y="238.6" width="7.4" height="7.2" fill="#15161a"/><rect x="341.5" y="239.4" width="6" height="5.2" fill="#ec74a6"/><rect x="341.8" y="239.6" width="1.6" height="1.1" fill="#f8e0e8"/><rect x="342.6" y="241.0" width="1.6" height="1.6" fill="#16160e"/><rect x="344.8" y="240.9" width="1.2" height="1.2" fill="#16160e"/><rect x="343.4" y="242.6" width="2.4" height="1.6" fill="#16160e"/><rect x="341.5" y="244.6" width="6" height="0.6" fill="#16160e"/><path d="M340 248H349L347.5 246H341.5z" fill="#a03cb0"/><rect x="340.3" y="248" width="8.4" height="0.8" fill="#15161a"/><rect x="292.8" y="254.29999999999998" width="7.4" height="7.2" fill="#15161a"/><rect x="293.5" y="255.1" width="6" height="5.2" fill="#ec74a6"/><rect x="293.8" y="255.29999999999998" width="1.6" height="1.1" fill="#f8e0e8"/><rect x="294.6" y="256.7" width="1.6" height="1.6" fill="#16160e"/><rect x="296.8" y="256.59999999999997" width="1.2" height="1.2" fill="#16160e"/><rect x="295.4" y="258.3" width="2.4" height="1.6" fill="#16160e"/><rect x="293.5" y="260.3" width="6" height="0.6" fill="#16160e"/><path d="M292 263H301L299.5 261H293.5z" fill="#a03cb0"/><rect x="292.3" y="263" width="8.4" height="0.8" fill="#15161a"/><rect x="308.8" y="254.29999999999998" width="7.4" height="7.2" fill="#15161a"/><rect x="309.5" y="255.1" width="6" height="5.2" fill="#ec74a6"/><rect x="309.8" y="255.29999999999998" width="1.6" height="1.1" fill="#f8e0e8"/><rect x="310.6" y="256.7" width="1.6" height="1.6" fill="#16160e"/><rect x="312.8" y="256.59999999999997" width="1.2" height="1.2" fill="#16160e"/><rect x="311.4" y="258.3" width="2.4" height="1.6" fill="#16160e"/><rect x="309.5" y="260.3" width="6" height="0.6" fill="#16160e"/><path d="M308 263H317L315.5 261H309.5z" fill="#a03cb0"/><rect x="308.3" y="263" width="8.4" height="0.8" fill="#15161a"/><rect x="324.8" y="254.29999999999998" width="7.4" height="7.2" fill="#15161a"/><rect x="325.5" y="255.1" width="6" height="5.2" fill="#ec74a6"/><rect x="325.8" y="255.29999999999998" width="1.6" height="1.1" fill="#f8e0e8"/><rect x="326.6" y="256.7" width="1.6" height="1.6" fill="#16160e"/><rect x="328.8" y="256.59999999999997" width="1.2" height="1.2" fill="#16160e"/><rect x="327.4" y="258.3" width="2.4" height="1.6" fill="#16160e"/><rect x="325.5" y="260.3" width="6" height="0.6" fill="#16160e"/><path d="M324 263H333L331.5 261H325.5z" fill="#a03cb0"/><rect x="324.3" y="263" width="8.4" height="0.8" fill="#15161a"/><rect x="340.8" y="254.29999999999998" width="7.4" height="7.2" fill="#15161a"/><rect x="341.5" y="255.1" width="6" height="5.2" fill="#ec74a6"/><rect x="341.8" y="255.29999999999998" width="1.6" height="1.1" fill="#f8e0e8"/><rect x="342.6" y="256.7" width="1.6" height="1.6" fill="#16160e"/><rect x="344.8" y="256.59999999999997" width="1.2" height="1.2" fill="#16160e"/><rect x="343.4" y="258.3" width="2.4" height="1.6" fill="#16160e"/><rect x="341.5" y="260.3" width="6" height="0.6" fill="#16160e"/><path d="M340 263H349L347.5 261H341.5z" fill="#a03cb0"/><rect x="340.3" y="263" width="8.4" height="0.8" fill="#15161a"/><rect x="292.8" y="269.3" width="7.4" height="7.2" fill="#15161a"/><rect x="293.5" y="270.09999999999997" width="6" height="5.2" fill="#ec74a6"/><rect x="293.8" y="270.3" width="1.6" height="1.1" fill="#f8e0e8"/><rect x="294.6" y="271.7" width="1.6" height="1.6" fill="#16160e"/><rect x="296.8" y="271.59999999999997" width="1.2" height="1.2" fill="#16160e"/><rect x="295.4" y="273.3" width="2.4" height="1.6" fill="#16160e"/><rect x="293.5" y="275.3" width="6" height="0.6" fill="#16160e"/><path d="M292 278H301L299.5 276H293.5z" fill="#a03cb0"/><rect x="292.3" y="278" width="8.4" height="0.8" fill="#15161a"/><rect x="308.8" y="269.3" width="7.4" height="7.2" fill="#15161a"/><rect x="309.5" y="270.09999999999997" width="6" height="5.2" fill="#ec74a6"/><rect x="309.8" y="270.3" width="1.6" height="1.1" fill="#f8e0e8"/><rect x="310.6" y="271.7" width="1.6" height="1.6" fill="#16160e"/><rect x="312.8" y="271.59999999999997" width="1.2" height="1.2" fill="#16160e"/><rect x="311.4" y="273.3" width="2.4" height="1.6" fill="#16160e"/><rect x="309.5" y="275.3" width="6" height="0.6" fill="#16160e"/><path d="M308 278H317L315.5 276H309.5z" fill="#a03cb0"/><rect x="308.3" y="278" width="8.4" height="0.8" fill="#15161a"/><rect x="324.8" y="269.3" width="7.4" height="7.2" fill="#15161a"/><rect x="325.5" y="270.09999999999997" width="6" height="5.2" fill="#ee4420"/><rect x="325.8" y="270.3" width="1.6" height="1.1" fill="#f8e0e8"/><rect x="326.6" y="271.7" width="1.6" height="1.6" fill="#16160e"/><rect x="328.8" y="271.59999999999997" width="1.2" height="1.2" fill="#16160e"/><rect x="327.4" y="273.3" width="2.4" height="1.6" fill="#16160e"/><rect x="325.5" y="275.3" width="6" height="0.6" fill="#16160e"/><path d="M324 278H333L331.5 276H325.5z" fill="#e83a10"/><rect x="324.3" y="278" width="8.4" height="0.8" fill="#15161a"/><rect x="340.8" y="269.3" width="7.4" height="7.2" fill="#15161a"/><rect x="341.5" y="270.09999999999997" width="6" height="5.2" fill="#ec74a6"/><rect x="341.8" y="270.3" width="1.6" height="1.1" fill="#f8e0e8"/><rect x="342.6" y="271.7" width="1.6" height="1.6" fill="#16160e"/><rect x="344.8" y="271.59999999999997" width="1.2" height="1.2" fill="#16160e"/><rect x="343.4" y="273.3" width="2.4" height="1.6" fill="#16160e"/><rect x="341.5" y="275.3" width="6" height="0.6" fill="#16160e"/><path d="M340 278H349L347.5 276H341.5z" fill="#a03cb0"/><rect x="340.3" y="278" width="8.4" height="0.8" fill="#15161a"/></svg>
<svg style="left:0;top:0" width="602" height="480" viewBox="0 0 602 480"><rect x="390.5" y="223.5" width="3.5" height="3.5" fill="#c07838"/><rect x="391.2" y="224.5" width="2" height="1.5" fill="#5ab030"/><rect x="394.5" y="223.5" width="3.5" height="3.5" fill="#c87838"/><rect x="395.2" y="224.5" width="2" height="1.5" fill="#f0a060"/><rect x="398.5" y="223.5" width="3.5" height="3.5" fill="#e8c89a"/><rect x="399.2" y="224.5" width="2" height="1.5" fill="#a87040"/><rect x="402.5" y="223.5" width="3.5" height="3.5" fill="#e8d0a0"/><rect x="403.2" y="224.5" width="2" height="1.5" fill="#a88050"/><rect x="406.5" y="223.5" width="3.5" height="3.5" fill="#c07040"/><rect x="407.2" y="224.5" width="2" height="1.5" fill="#f0c030"/><rect x="410.5" y="223.5" width="3.5" height="3.5" fill="#c88070"/><rect x="411.2" y="224.5" width="2" height="1.5" fill="#f0b0a0"/><rect x="414.5" y="223.5" width="3.5" height="3.5" fill="#4080b0"/><rect x="415.2" y="224.5" width="2" height="1.5" fill="#40c0e0"/><rect x="418.5" y="223.5" width="3.5" height="3.5" fill="#60e0f0"/><rect x="419.2" y="224.5" width="2" height="1.5" fill="#3080a0"/><rect x="422.5" y="223.5" width="3.5" height="3.5" fill="#a0a8c0"/><rect x="423.2" y="224.5" width="2" height="1.5" fill="#707890"/><rect x="427.3" y="224.5" width="1" height="1" fill="#b87038"/><rect x="429.40000000000003" y="224.5" width="1" height="1" fill="#b87038"/><rect x="431.5" y="224.5" width="1" height="1" fill="#b87038"/><rect x="433.6" y="224.5" width="1" height="1" fill="#b87038"/><rect x="435.7" y="224.5" width="1" height="1" fill="#b87038"/><rect x="437.8" y="224.5" width="1" height="1" fill="#b87038"/><rect x="390.5" y="227.6" width="3.5" height="3.5" fill="#c87838"/><rect x="391.2" y="228.6" width="2" height="1.5" fill="#a05020"/><rect x="394.5" y="227.6" width="3.5" height="3.5" fill="#c87838"/><rect x="395.2" y="228.6" width="2" height="1.5" fill="#f0a060"/><rect x="398.5" y="227.6" width="3.5" height="3.5" fill="#e8c89a"/><rect x="399.2" y="228.6" width="2" height="1.5" fill="#a87040"/><rect x="402.5" y="227.6" width="3.5" height="3.5" fill="#e8d0a0"/><rect x="403.2" y="228.6" width="2" height="1.5" fill="#a88050"/><rect x="406.5" y="227.6" width="3.5" height="3.5" fill="#c88070"/><rect x="407.2" y="228.6" width="2" height="1.5" fill="#a05040"/><rect x="410.5" y="227.6" width="3.5" height="3.5" fill="#c88070"/><rect x="411.2" y="228.6" width="2" height="1.5" fill="#f0b0a0"/><rect x="414.5" y="227.6" width="3.5" height="3.5" fill="#8090b0"/><rect x="415.2" y="228.6" width="2" height="1.5" fill="#b0c0d0"/><rect x="418.5" y="227.6" width="3.5" height="3.5" fill="#a0b0c0"/><rect x="419.2" y="228.6" width="2" height="1.5" fill="#60e0f0"/><rect x="422.5" y="227.6" width="3.5" height="3.5" fill="#8890a8"/><rect x="423.2" y="228.6" width="2" height="1.5" fill="#b0b8c8"/><rect x="427.3" y="228.6" width="1" height="1" fill="#b87038"/><rect x="429.40000000000003" y="228.6" width="1" height="1" fill="#b87038"/><rect x="431.5" y="228.6" width="1" height="1" fill="#b87038"/><rect x="433.6" y="228.6" width="1" height="1" fill="#b87038"/><rect x="435.7" y="228.6" width="1" height="1" fill="#b87038"/><rect x="437.8" y="228.6" width="1" height="1" fill="#b87038"/><rect x="390.5" y="231.7" width="3.5" height="3.5" fill="#c07838"/><rect x="391.2" y="232.7" width="2" height="1.5" fill="#904018"/><rect x="394.5" y="231.7" width="3.5" height="3.5" fill="#c87838"/><rect x="395.2" y="232.7" width="2" height="1.5" fill="#904018"/><rect x="398.5" y="231.7" width="3.5" height="3.5" fill="#e8c89a"/><rect x="399.2" y="232.7" width="2" height="1.5" fill="#604030"/><rect x="402.5" y="231.7" width="3.5" height="3.5" fill="#e8d0a0"/><rect x="403.2" y="232.7" width="2" height="1.5" fill="#a88050"/><rect x="406.5" y="231.7" width="3.5" height="3.5" fill="#c88070"/><rect x="407.2" y="232.7" width="2" height="1.5" fill="#e0b0a0"/><rect x="410.5" y="231.7" width="3.5" height="3.5" fill="#c88070"/><rect x="411.2" y="232.7" width="2" height="1.5" fill="#f0b0a0"/><rect x="414.5" y="231.7" width="3.5" height="3.5" fill="#40d0e0"/><rect x="415.2" y="232.7" width="2" height="1.5" fill="#40d0e0"/><rect x="418.5" y="231.7" width="3.5" height="3.5" fill="#8890a8"/><rect x="419.2" y="232.7" width="2" height="1.5" fill="#b0b8c8"/><rect x="422.5" y="231.7" width="3.5" height="3.5" fill="#a0a8c0"/><rect x="423.2" y="232.7" width="2" height="1.5" fill="#d0d8e8"/><rect x="427.3" y="232.7" width="1" height="1" fill="#b87038"/><rect x="429.40000000000003" y="232.7" width="1" height="1" fill="#b87038"/><rect x="431.5" y="232.7" width="1" height="1" fill="#b87038"/><rect x="433.6" y="232.7" width="1" height="1" fill="#b87038"/><rect x="435.7" y="232.7" width="1" height="1" fill="#b87038"/><rect x="437.8" y="232.7" width="1" height="1" fill="#b87038"/><rect x="391" y="236" width="3" height="11" fill="#2a9a30"/><rect x="391.5" y="247" width="2" height="1.5" fill="#8a5020"/><rect x="395" y="236" width="3" height="4" fill="#2a9a30"/><rect x="395" y="241" width="3" height="2" fill="#2a9a30"/><rect x="395.5" y="244" width="2" height="2" fill="#1e7a28"/><rect x="399" y="236" width="3.5" height="4" fill="#e0c090"/><rect x="400" y="237" width="1.5" height="1.5" fill="#806040"/><path d="M404.6 245.5L401 243M404.6 245.5L408.4 243M404.6 245.5L400.6 247.6M404.6 245.5L408.8 247.8M404.6 245.5L404.6 242" stroke="#2a9a30" stroke-width="1.3"/><rect x="404" y="246" width="1.2" height="16" fill="#a06030"/><rect x="403.3" y="244.6" width="2.6" height="1.8" fill="#1e7a28"/><rect x="411" y="236" width="3.5" height="11.5" fill="#f8a020"/><rect x="411" y="248" width="3.5" height="3" fill="#f8a020"/><rect x="411" y="252" width="3.5" height="2.5" fill="#f8b030"/><rect x="411" y="256" width="3.5" height="2" fill="#f0a020"/><rect x="415" y="236" width="3.5" height="11.5" fill="#2e9a6a"/><rect x="415" y="248" width="3.5" height="3" fill="#2e9a6a"/><rect x="415" y="252" width="3.5" height="2.5" fill="#2e9a6a"/><rect x="415" y="256" width="3.5" height="2" fill="#2e9a6a"/><rect x="419" y="236" width="3.5" height="3.5" fill="#a05c30"/><rect x="419" y="240" width="3.5" height="3.5" fill="#a05c30"/><rect x="419" y="244" width="3.5" height="3" fill="#e04818"/><rect x="419" y="248" width="3.5" height="3" fill="#f8a828"/><rect x="419" y="252" width="3.5" height="2.5" fill="#c048a8"/><rect x="419" y="256" width="3.5" height="2.5" fill="#2e9a6a"/><rect x="423" y="236" width="3.5" height="3.5" fill="#d09060"/><rect x="423" y="240" width="3.5" height="3.5" fill="#c08070"/><rect x="423" y="244" width="3.5" height="3" fill="#c04820"/><rect x="423" y="248" width="3.5" height="3" fill="#e07818"/><rect x="423" y="252" width="3.5" height="2.5" fill="#c04898"/><rect x="423" y="256" width="3.5" height="2.5" fill="#2a8060"/><rect x="427" y="238" width="3" height="2" fill="#8a5030"/><rect x="427" y="242" width="3" height="2" fill="#8a5030"/><rect x="391" y="252" width="1.5" height="3" fill="#2a9a30"/><rect x="391" y="255" width="1.5" height="4" fill="#40c0f0"/><rect x="395.5" y="252" width="1.5" height="3" fill="#f8b020"/><rect x="395.5" y="255" width="1.5" height="4" fill="#d040a0"/><rect x="395" y="249.5" width="3" height="1.5" fill="#e0e0d0"/><rect x="399.5" y="254" width="1" height="5" fill="#a06030"/><rect x="407" y="256.5" width="3.5" height="2" fill="#f8a020"/><rect x="390" y="259" width="4" height="6" fill="#f8f8f8"/><rect x="390" y="265" width="4" height="8" fill="#40a8f0"/><rect x="390" y="273" width="4" height="10" fill="#2060d0"/><rect x="390" y="283" width="4" height="4" fill="#103080"/><rect x="394" y="259" width="4" height="6" fill="#f8d0c0"/><rect x="394" y="265" width="4" height="8" fill="#f09890"/><rect x="394" y="273" width="4" height="10" fill="#ffc030"/><rect x="394" y="283" width="4" height="4" fill="#f89010"/><rect x="398" y="259" width="4" height="6" fill="#f0a0a0"/><rect x="398" y="265" width="4" height="8" fill="#e87070"/><rect x="398" y="273" width="4" height="10" fill="#c050b0"/><rect x="398" y="283" width="4" height="4" fill="#803090"/><rect x="402" y="259" width="4" height="6" fill="#e0e0f0"/><rect x="402" y="265" width="4" height="8" fill="#b0b8d0"/><rect x="402" y="273" width="4" height="10" fill="#a0a8c0"/><rect x="402" y="283" width="4" height="4" fill="#8088a0"/><rect x="406" y="259" width="4" height="9" fill="#40a0e0"/><rect x="406" y="268" width="4" height="8" fill="#c050b0"/><rect x="406" y="276" width="4" height="8" fill="#f8a020"/><rect x="414" y="259" width="5" height="8" fill="#5090d0"/><rect x="411" y="261" width="2" height="1.5" fill="#40a0a0"/><rect x="419.5" y="261" width="3" height="1.5" fill="#8070c0"/><rect x="410.5" y="270" width="3" height="1.5" fill="#c06090"/><rect x="410.5" y="278" width="3" height="1.5" fill="#c08030"/></svg>
<!--/SPRITES-->
<div class="txt" style="left:157.5px;top:188px;width:120px;text-align:center;letter-spacing:0.4px;color:#eaecee">coin.png</div>
<div class="txt" style="left:259.5px;top:188px;width:120px;text-align:center;letter-spacing:0.7px;color:#c3c6cb">fruit.png</div>
<div class="txt" style="left:361.5px;top:188px;width:120px;text-align:center;letter-spacing:0.55px;color:#c3c6cb">knight.png</div>
<div class="txt" style="left:463.5px;top:188px;width:120px;text-align:center;letter-spacing:0.55px;color:#c3c6cb">platforms.png</div>
<div class="txt" style="left:157.5px;top:294px;width:120px;text-align:center;letter-spacing:0.3px">slime_green.p</div>
<div class="txt" style="left:157.5px;top:312px;width:120px;text-align:center;letter-spacing:0.3px">ng</div>
<div class="txt" style="left:259.5px;top:294px;width:120px;text-align:center;letter-spacing:0.3px">slime_purple.</div>
<div class="txt" style="left:259.5px;top:312px;width:120px;text-align:center;letter-spacing:0.3px">png</div>
<div class="txt" style="left:361.5px;top:294px;width:120px;text-align:center;letter-spacing:0.3px">world_tileset.p</div>
<div class="txt" style="left:361.5px;top:312px;width:120px;text-align:center;letter-spacing:0.3px">ng</div>


<!-- bottom -->
<div class="lbl" style="left:168px;top:402px">File:</div>
<div class="input" style="left:204px;top:395px;width:220px;height:30px"></div>
<div class="txt" style="left:210px;top:402px;letter-spacing:0.35px">coin.png</div>
<div class="input" style="left:428px;top:395px;width:165px;height:30px"></div>
<div class="txt" style="left:434px;top:402px;letter-spacing:0.3px">All Recognized (*.tre</div>
<svg style="left:578px;top:406px" width="10" height="7" viewBox="0 0 10 7"><path d="M0.8 1.2l4.2 4.2 4.2-4.2" stroke="#c6c8cc" stroke-width="1.5" fill="none"/></svg>

<div class="btn" style="left:132px;top:437px;width:105px;height:34px;background:#4b515e"></div>
<div class="txt" style="left:132px;top:446px;width:105px;text-align:center;letter-spacing:0.3px">Open</div>
<div class="btn" style="left:364px;top:437px;width:105px;height:34px;background:#252a33"></div>
<div class="txt" style="left:364px;top:446px;width:105px;text-align:center;letter-spacing:0.1px">Cancel</div>

<!-- cursor -->
<svg style="left:215px;top:451px" width="13" height="20" viewBox="0 0 13 20"><path d="M0 0V16.5L4 13l2.6 5.6 2.2-1-2.5-5.3H11.5z" fill="#fff" stroke="#000" stroke-width="1" stroke-linejoin="round"/></svg>
</body></html>
